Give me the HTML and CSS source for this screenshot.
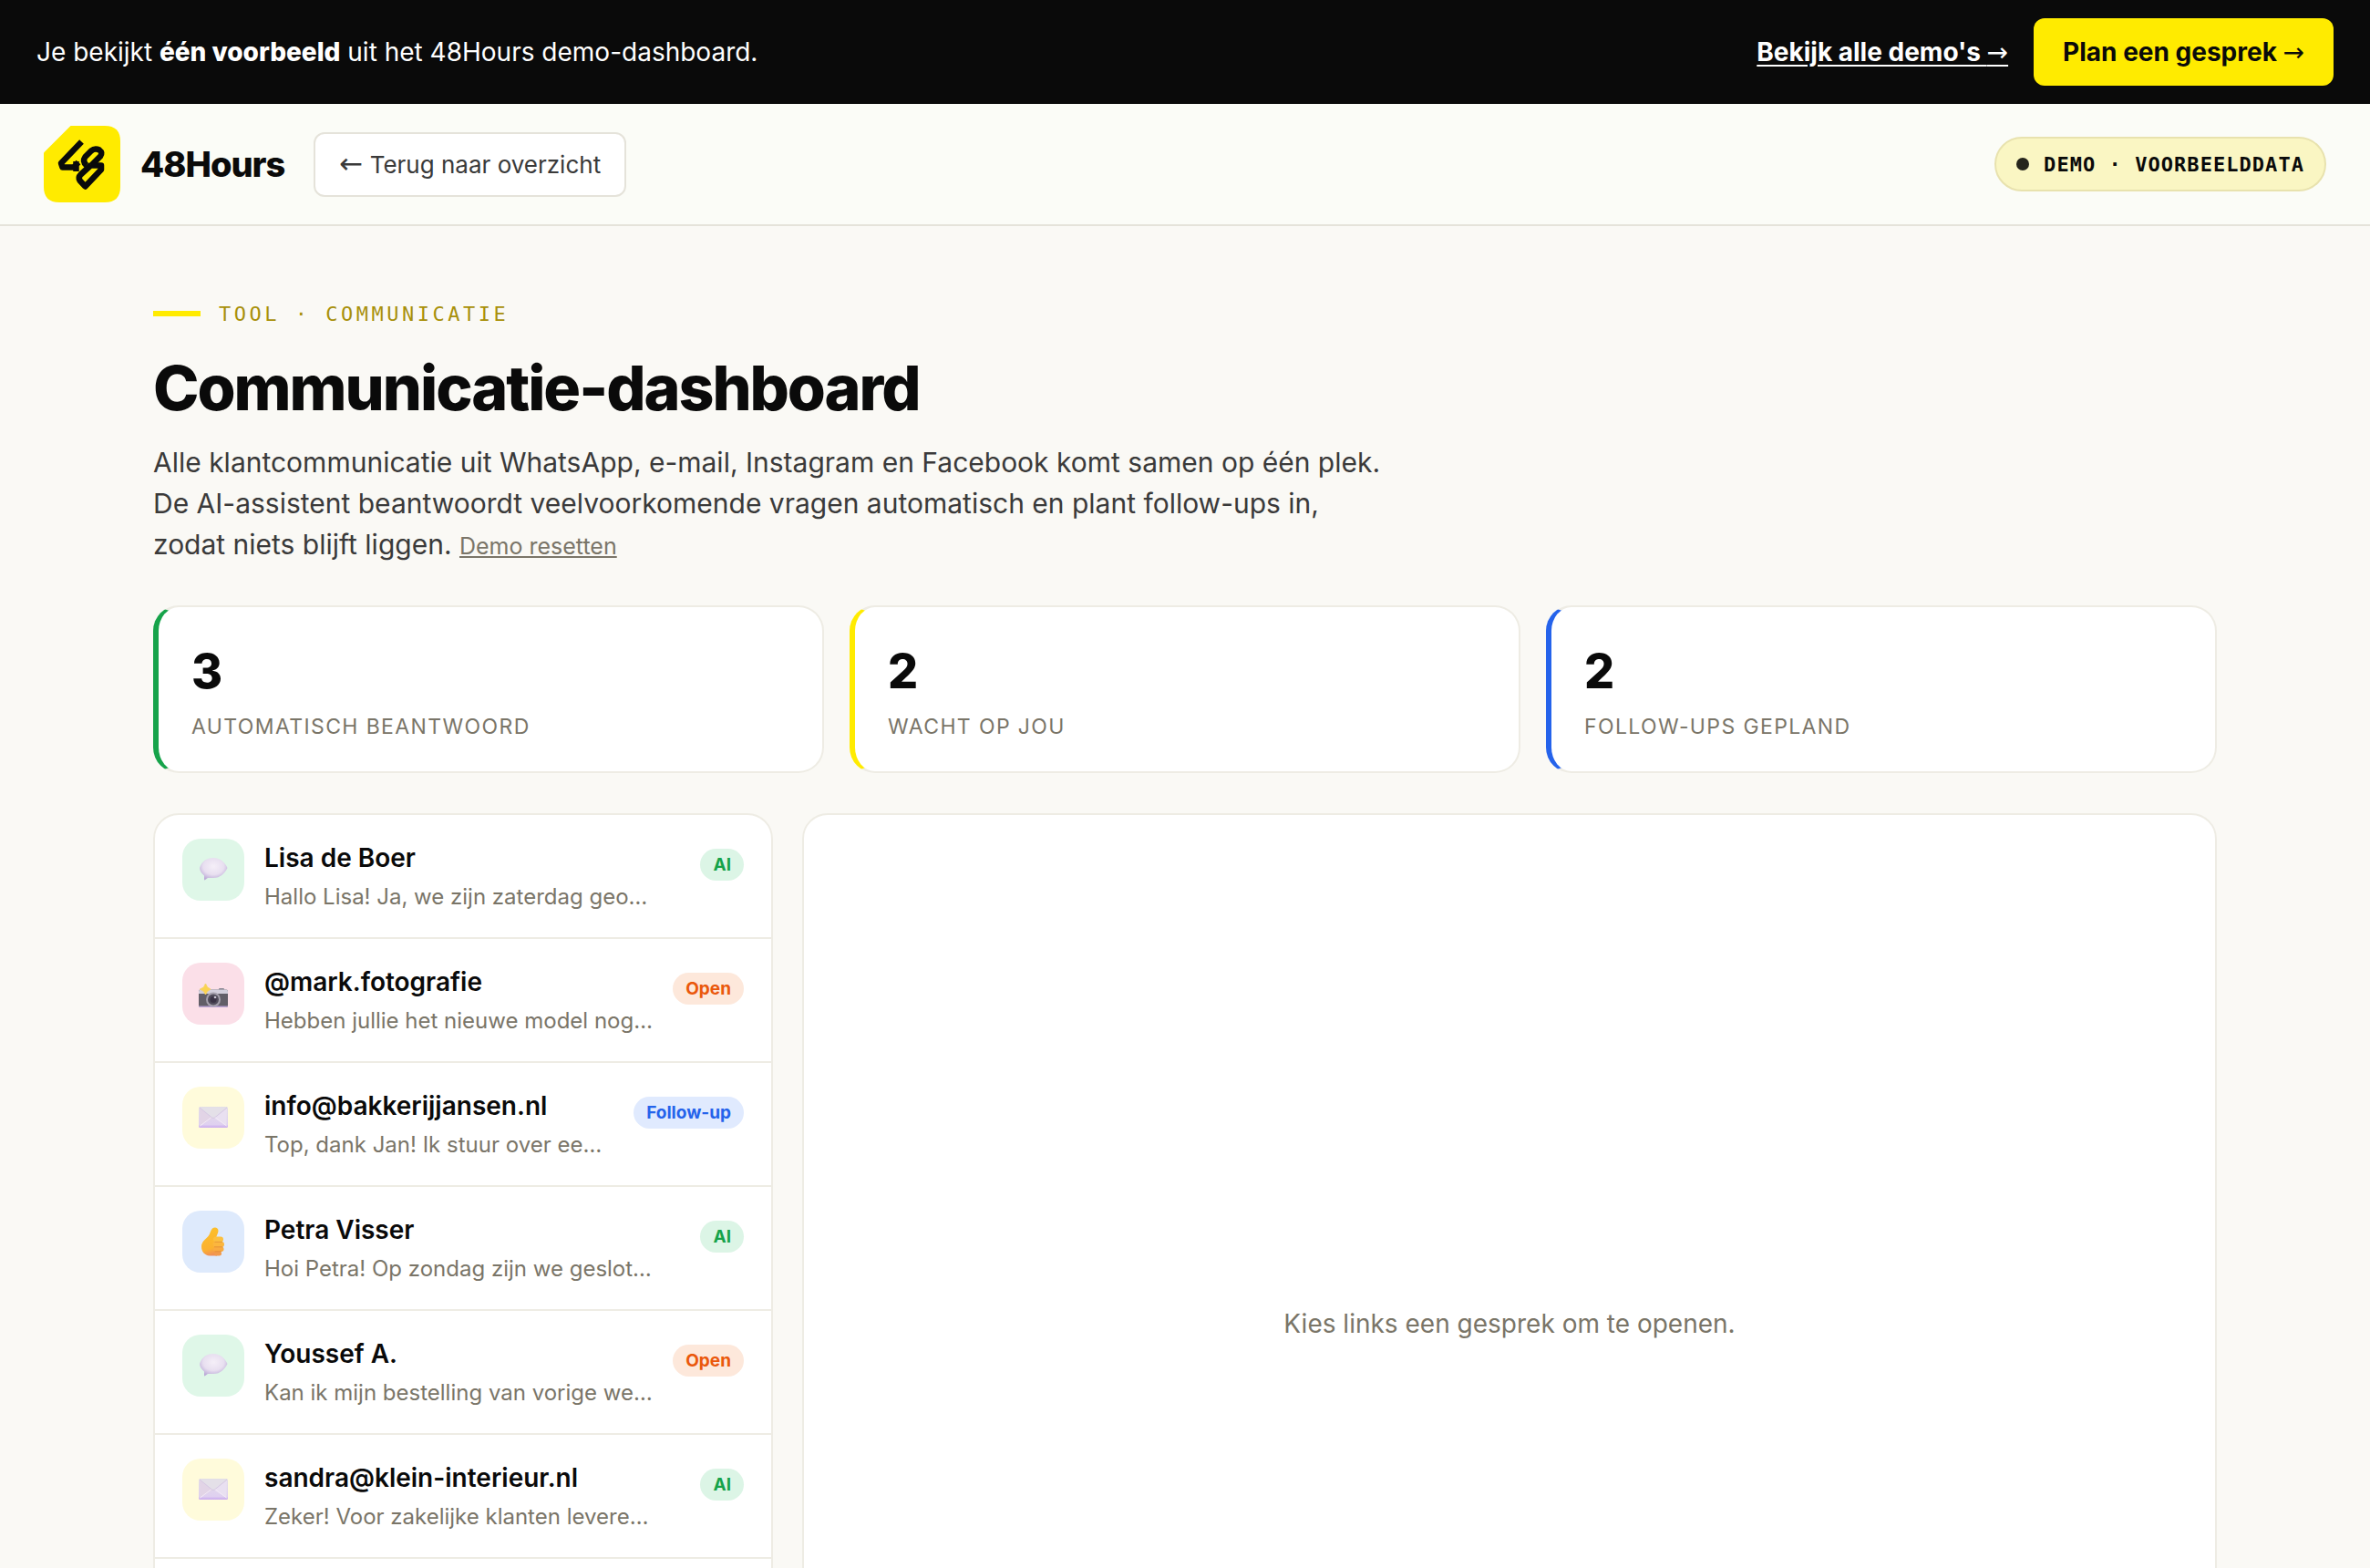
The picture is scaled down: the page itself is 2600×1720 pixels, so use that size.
FILE: index.html
```html
<!doctype html>
<html lang="nl">
<head>
	<meta charset="utf-8">
	<title>Communicatie-dashboard</title>
	<link rel="stylesheet" href="styles.css">
</head>
<body>
<svg class="defs" width="0" height="0">
	<defs>
		<radialGradient id="gBubble" cx="50%" cy="38%" r="62%">
			<stop offset="0" stop-color="#f5eff8"/>
			<stop offset=".6" stop-color="#e8dff0"/>
			<stop offset="1" stop-color="#baa9d6"/>
		</radialGradient>
		<linearGradient id="gMail" x1="0" y1="0" x2="0" y2="1">
			<stop offset="0" stop-color="#e3dfe6"/>
			<stop offset=".85" stop-color="#dfd0f0"/>
			<stop offset="1" stop-color="#c9a8ee"/>
		</linearGradient>
		<linearGradient id="gThumb" x1=".4" y1="0" x2=".55" y2="1">
			<stop offset="0" stop-color="#fdc02a"/>
			<stop offset=".75" stop-color="#fbb130"/>
			<stop offset="1" stop-color="#f08d58"/>
		</linearGradient>
		<symbol id="chat" viewBox="0 0 32 32">
			<path d="M16 3C24 3 28.500 8 31.500 14C28.500 20 24 25 16 25C13 25 11 25 10 25L6.500 27.500Q6 27.500 6 26.500V22.500C3.500 20.500 1 17.500 1 14C3 7.500 8.500 3 16 3Z" fill="url(#gBubble)"/>
		</symbol>
		<symbol id="camera" viewBox="0 0 32 32">
			<rect x="22" y="10" width="6" height="3" rx="1" fill="#8d8994"/>
			<rect x="0" y="11.500" width="32" height="19.500" rx="2" fill="#625f68"/>
			<path d="M0 16V13.500Q0 11.500 2 11.500H30Q32 11.500 32 13.500V16Z" fill="#d2cfdc"/>
			<path d="M0 29.500H32Q32 31 30 31H2Q0 31 0 29.500Z" fill="#b9a3d3"/>
			<circle cx="16" cy="22.500" r="8" fill="#a5a1ad"/>
			<circle cx="16" cy="22.500" r="6" fill="#514d5b"/>
			<circle cx="16" cy="22.500" r="3.500" fill="#3a3345"/>
			<circle cx="18" cy="20" r="1.300" fill="#c9c5d2"/>
			<path d="M7.500 5L9.500 9L13 11L9.500 13.500L7.500 17L5.500 13.500L1.500 11L5.500 9Z" fill="#fbd350" stroke="#f6d469" stroke-width="1"/>
		</symbol>
		<symbol id="mail" viewBox="0 0 32 32">
			<rect x="0" y="4" width="32" height="23" rx="1.500" fill="url(#gMail)"/>
			<path d="M1 5L16 17L31 5Z" fill="#e4e0e8"/>
			<path d="M1 5.500L15 16.500L1.500 25Z" fill="#e2d4e6"/>
			<path d="M31 5.500L17 16.500L30.500 25Z" fill="#e9e0f1"/>
			<path d="M1 5L14.500 16Q16 17 17.500 16L31 5" fill="none" stroke="#d6c8e3" stroke-width="1"/>
			<path d="M13.500 16L1.500 25M18.500 16L30.500 25" fill="none" stroke="#f3eaf7" stroke-width="1"/>
		</symbol>
		<symbol id="thumb" viewBox="0 0 32 32">
			<path d="M15 1.500C17.500 -.5 21.500 .5 21.500 4C21.500 7 19.500 9 19 12L20 31.500H12C6.500 31 3 27 3 21.500C3 16 7.500 13.500 10.500 10C12.500 7.500 13 3.500 15 1.500Z" fill="url(#gThumb)"/>
			<rect x="16" y="10.500" width="11" height="6" rx="3" fill="#fcc040"/>
			<rect x="15.500" y="16" width="12.500" height="6" rx="3" fill="#fbb63e"/>
			<rect x="16" y="21.500" width="11.500" height="5.500" rx="2.700" fill="#f9ab40"/>
			<rect x="17" y="26.500" width="8" height="5" rx="2.500" fill="#f29a4c"/>
			<path d="M17.500 16.300H26M17 21.800H26.500M17.500 26.800H25" stroke="#e08a34" stroke-width=".7"/>
		</symbol>
	</defs>
</svg>

<div class="demobar">
	<p>Je bekijkt <strong>één voorbeeld</strong> uit het 48Hours demo-dashboard.</p>
	<div class="demobar-links">
		<a class="all" href="#">Bekijk alle demo's <span class="arr">→</span></a>
		<a class="cta" href="#">Plan een gesprek <span class="arr">→</span></a>
	</div>
</div>

<header class="top">
	<svg class="logo" viewBox="0 0 84 84">
		<path d="M29.500 0H67Q84 0 84 17V67Q84 84 67 84H17Q0 84 0 67V29.500Z" fill="#ffeb00"/>
		<g fill="none" stroke="#0a0a0a" stroke-width="6.500" stroke-linejoin="round">
			<path d="M41.500 17.500L19 41L20.500 45.500H33L38 40M35.500 39V50"/>
			<path d="M52 43.500L62 33.500Q65 29.500 61 26.500Q56 24 52 27.500L45.500 34Q42 39 47 43.500"/>
			<path d="M52 43.500H63V48L45.500 66.500L39.500 60Q37.500 56.500 40.500 53.500L52 43"/>
		</g>
	</svg>
	<span class="brand">48Hours</span>
	<a class="back" href="#"><span class="arr">←</span> Terug naar overzicht</a>
	<span class="pill"><i></i>DEMO · VOORBEELDDATA</span>
</header>

<main>
	<div class="eyebrow">TOOL · COMMUNICATIE</div>
	<h1>Communicatie-dashboard</h1>
	<p class="intro">Alle klantcommunicatie uit WhatsApp, e-mail, Instagram en Facebook komt samen op één plek. De AI-assistent beantwoordt veelvoorkomende vragen automatisch en plant follow-ups in, zodat niets blijft liggen. <a href="#">Demo resetten</a></p>

	<div class="stats">
		<div class="stat green"><b>3</b><span>Automatisch beantwoord</span></div>
		<div class="stat yellow"><b>2</b><span>Wacht op jou</span></div>
		<div class="stat blue"><b>2</b><span>Follow-ups gepland</span></div>
	</div>

	<div class="inbox">
		<ul class="list">
			<li>
				<div class="icon wa"><svg><use href="#chat"/></svg></div>
				<div class="txt"><h3>Lisa de Boer</h3><p>Hallo Lisa! Ja, we zijn zaterdag geo…</p></div>
				<span class="tag ai">AI</span>
			</li>
			<li>
				<div class="icon ig"><svg><use href="#camera"/></svg></div>
				<div class="txt"><h3>@mark.fotografie</h3><p>Hebben jullie het nieuwe model nog…</p></div>
				<span class="tag open">Open</span>
			</li>
			<li>
				<div class="icon em"><svg><use href="#mail"/></svg></div>
				<div class="txt"><h3>info@bakkerijjansen.nl</h3><p>Top, dank Jan! Ik stuur over ee…</p></div>
				<span class="tag follow">Follow-up</span>
			</li>
			<li>
				<div class="icon fb"><svg><use href="#thumb"/></svg></div>
				<div class="txt"><h3>Petra Visser</h3><p>Hoi Petra! Op zondag zijn we geslot…</p></div>
				<span class="tag ai">AI</span>
			</li>
			<li>
				<div class="icon wa"><svg><use href="#chat"/></svg></div>
				<div class="txt"><h3>Youssef A.</h3><p>Kan ik mijn bestelling van vorige we…</p></div>
				<span class="tag open">Open</span>
			</li>
			<li>
				<div class="icon em"><svg><use href="#mail"/></svg></div>
				<div class="txt"><h3>sandra@klein-interieur.nl</h3><p>Zeker! Voor zakelijke klanten levere…</p></div>
				<span class="tag ai">AI</span>
			</li>
		</ul>
		<div class="detail">Kies links een gesprek om te openen.</div>
	</div>
</main>
</body>
</html>
```
FILE: styles.css
```css
*{margin: 0;padding: 0;box-sizing: border-box;list-style: none;}
html{overflow: hidden;}
body{
	height: 1720px;overflow: hidden;
	background: #faf9f5;color: #0a0a0a;
	font-family: Inter, "Liberation Sans", sans-serif;
	font-size: 28px;line-height: 1.5;
}
a{color: inherit;}
.defs{position: absolute;}
.arr{font-family: "DejaVu Sans", sans-serif;font-weight: 400;line-height: 1;}

/* black bar */
.demobar{
	display: flex;align-items: center;justify-content: space-between;
	height: 114px;padding: 0 40px;
	background: #0a0a0a;color: #fff;
}
.demobar strong{font-weight: 800;}
.demobar-links{display: flex;align-items: center;gap: 28px;}
.all{font-weight: 700;text-underline-offset: 4px;}
.cta{
	padding: 16px 32px;border-radius: 12px;
	background: #ffeb00;color: #0a0a0a;
	font-weight: 700;text-decoration: none;
}

/* header */
.top{
	display: flex;align-items: center;
	height: 134px;padding: 0 48px;
	background: #fbfcf7;border-bottom: 2px solid #e5e3da;
}
.logo{width: 84px;height: 84px;}
.brand{
	margin: 0 32px 0 22px;
	font-size: 38px;font-weight: 800;letter-spacing: -0.026em;
}
.back{
	height: 71px;padding: 14px 26px;
	border: 2px solid #e5e3da;border-radius: 12px;
	background: #fff;color: #3a3a3a;
	font-size: 26px;text-decoration: none;
}
.back .arr{font-size: 31px;line-height: 20px;}
.pill{
	display: flex;align-items: center;gap: 16px;
	height: 60px;margin-left: auto;padding: 0 22px;
	border: 2px solid #e8e2ae;border-radius: 30px;
	background: #faf6c3;
	font-family: "DejaVu Sans Mono", monospace;
	font-size: 22px;font-weight: 700;letter-spacing: 1.05px;
}
.pill i{width: 14px;height: 14px;border-radius: 50%;background: #26251c;}

main{width: 2264px;margin: 0 auto;padding-top: 80px;}
.eyebrow{
	display: flex;align-items: center;gap: 20px;
	height: 32px;
	color: #a8900a;
	font-family: "DejaVu Sans Mono", monospace;
	font-size: 22px;letter-spacing: 3.5px;
}
.eyebrow:before{content: "";width: 52px;height: 6px;background: #ffeb00;}
h1{
	margin-top: 28px;
	font-size: 68px;font-weight: 800;line-height: 75px;letter-spacing: -0.03em;
}
.intro{
	width: 1360px;margin-top: 22px;
	color: #3a3a3a;font-size: 30px;line-height: 45px;
}
.intro a{color: #7a7568;font-size: 25px;line-height: 1;}

.stats{
	display: grid;grid-template-columns: repeat(3, 1fr);gap: 28px;
	margin-top: 44px;
}
.stat{
	height: 184px;padding: 32px 36px;
	border: 2px solid #eeece4;border-left: 6px solid;border-radius: 28px;
	background: #fff;
}
.stat b{display: block;font-size: 52px;font-weight: 800;line-height: 78px;}
.stat span{
	display: block;margin-top: 4px;
	color: #7a7568;font-size: 23px;line-height: 34px;
	letter-spacing: 0.06em;text-transform: uppercase;
}
.stat.green{border-left-color: #16a34a;}
.stat.yellow{border-left-color: #ffeb00;}
.stat.blue{border-left-color: #2563eb;}

.inbox{
	display: grid;grid-template-columns: 680px 1fr;gap: 32px;
	height: 1120px;margin-top: 44px;
}
.list,.detail{border: 2px solid #eeece4;border-radius: 28px;background: #fff;}
.list li{
	display: flex;align-items: flex-start;gap: 22px;
	height: 136px;padding: 26px 30px;
	border-bottom: 2px solid #eeece4;
}
.icon{
	display: flex;align-items: center;justify-content: center;
	width: 68px;height: 68px;border-radius: 20px;
}
.icon svg{width: 32px;height: 32px;}
.wa{background: #dff7e8;}
.ig{background: #fbdfe8;}
.em{background: #fffbdb;}
.fb{background: #deeafc;}
.txt{flex: 1;min-width: 0;white-space: nowrap;}
.txt h3{font-size: 28px;font-weight: 600;line-height: 42px;}
.txt p{margin-top: 4px;color: #7a7568;font-size: 24px;line-height: 36px;}
.tag{
	height: 35px;margin-top: 11px;padding: 0 14px;
	border-radius: 18px;
	font-size: 19px;font-weight: 700;line-height: 35px;
}
.ai{background: #dcf5e6;color: #16a34a;}
.open{background: #fde8db;color: #ea580c;}
.follow{background: #e0eafe;color: #2563eb;}
.detail{
	display: flex;align-items: center;justify-content: center;
	color: #7a7568;
}
```
